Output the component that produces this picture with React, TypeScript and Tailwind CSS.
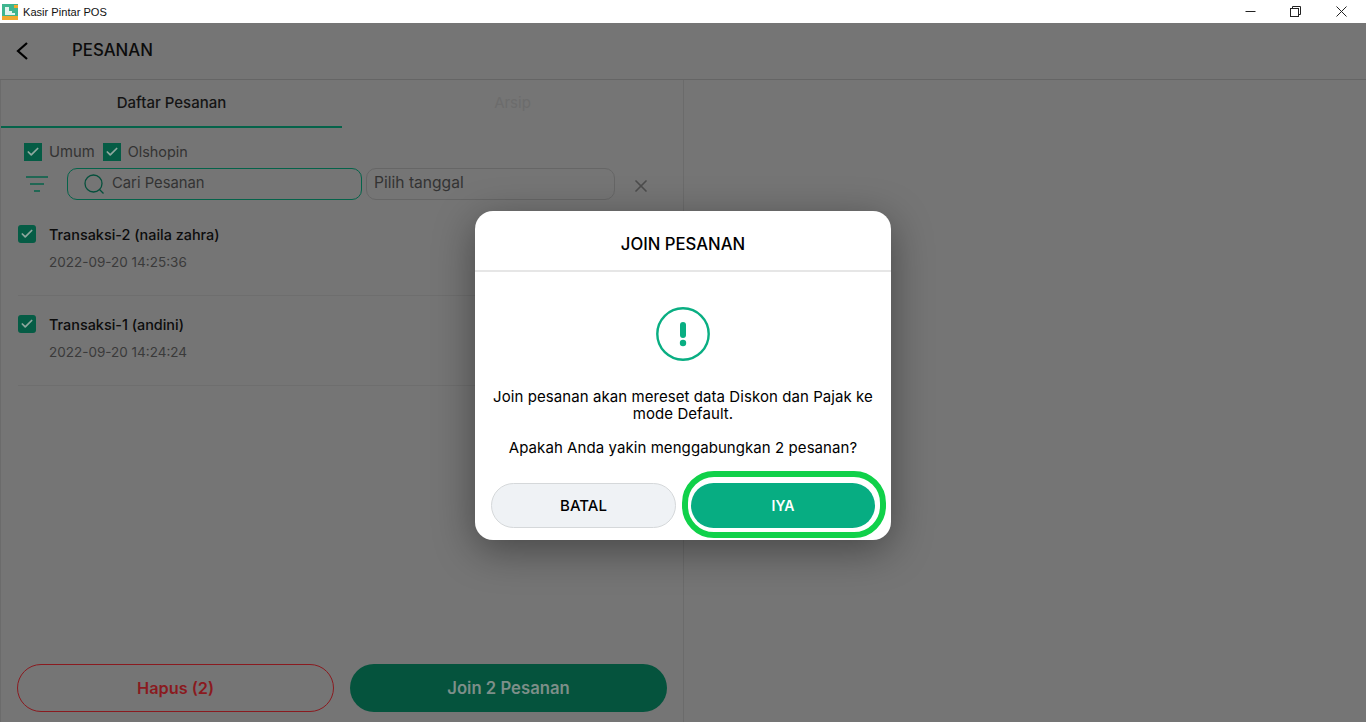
import React from 'react';
import { Check, X } from 'lucide-react';

const FONT = 'font-[Inter,"Noto_Sans",sans-serif]';

// Checkbox used by the filter row and the order rows
const Tick = ({ rounded }: { rounded?: boolean }) => (
  <span className={`flex h-[18px] w-[18px] shrink-0 items-center justify-center bg-[#055c45] ${rounded ? 'rounded-[3px]' : ''}`}>
    <Check className="h-[14px] w-[14px] text-[#8fa89f]" strokeWidth={3} />
  </span>
);

const orders = [
  { name: 'Transaksi-2 (naila zahra)', time: '2022-09-20 14:25:36' },
  { name: 'Transaksi-1 (andini)', time: '2022-09-20 14:24:24' },
];

const TitleBar = () => (
  <div className="flex h-[23px] items-center bg-white pl-[2px] font-['Liberation_Sans',sans-serif]">
    <svg width="16" height="16" viewBox="0 0 16 16" className="shrink-0">
      <rect width="16" height="16" fill="#3fb58f" />
      <rect y="12" width="16" height="4" fill="#f0a92e" />
      <rect x="12" y="1" width="4" height="3" fill="#f0a92e" />
      <path d="M4 3h3v4h3v2h3v2H3V3z" fill="#ffffff" opacity="0.85" />
    </svg>
    <span className="ml-[5px] pt-[1px] text-[11.1px] text-[#111]">Kasir Pintar POS</span>
    <div className="ml-auto mr-[2px] flex h-full items-center text-black">
      <span className="flex w-[44px] justify-center">
        <svg width="11" height="11" viewBox="0 0 11 11"><path d="M0.5 5.5h10" stroke="#222" fill="none" /></svg>
      </span>
      <span className="flex w-[46px] justify-center">
        <svg width="11" height="11" viewBox="0 0 11 11" fill="none" stroke="#222"><rect x="0.5" y="2.5" width="8" height="8" /><path d="M2.5 2.5v-2h8v8h-2" /></svg>
      </span>
      <span className="flex w-[46px] justify-center">
        <svg width="11" height="11" viewBox="0 0 11 11" fill="none" stroke="#222"><path d="M0.5 0.5l10 10M10.5 0.5l-10 10" /></svg>
      </span>
    </div>
  </div>
);

const App: React.FC = () => {
  return (
    <div className={`relative flex h-[722px] w-[1366px] flex-col overflow-hidden bg-[#757575] ${FONT}`}>
      <TitleBar />

      {/* page behind the dialog */}
      <div className="flex h-[57px] items-center border-b border-[#656565]">
        <svg width="12" height="18" viewBox="0 0 12 18" fill="none" stroke="#000" strokeWidth="2.2" className="ml-[16px] shrink-0">
          <path d="M11 1L2 9l9 8" />
        </svg>
        <h1 className="ml-[44px] text-[16.8px] font-medium text-[#0c0c0c]">PESANAN</h1>
      </div>

      <div className="flex flex-1">
        <div className="flex w-[684px] flex-col border-x border-[#6b6b6b]">
          <div className="flex h-[48px]">
            <div className="flex w-[341px] items-center justify-center border-b-2 border-[#05634a] text-[15px] font-medium text-[#141414]">Daftar Pesanan</div>
            <div className="flex flex-1 items-center justify-center pb-[2px] text-[15px] text-[#6c6c6c]">Arsip</div>
          </div>

          <div className="mt-[13px] flex items-center pl-[23px] text-[14.8px] leading-[22px] text-[#333]">
            <Tick />
            <span className="ml-[7px]">Umum</span>
            <span className="ml-[8px]"><Tick /></span>
            <span className="ml-[7px] text-[14.4px]">Olshopin</span>
          </div>

          <div className="mt-[5px] flex items-center pl-[24px]">
            <svg width="24" height="18" viewBox="0 0 24 18" fill="none" stroke="#05634a" strokeWidth="1.6" className="shrink-0">
              <path d="M1 2h22M5 9h14M9 16h6" />
            </svg>
            <div className="ml-[18px] flex h-[32px] w-[295px] items-center rounded-[10px] border border-[#05634a] pb-[1px] pl-[16px]">
              <svg width="20" height="20" viewBox="0 0 20 20" fill="none" stroke="#05503c" strokeWidth="1.3" className="shrink-0">
                <circle cx="9.5" cy="9.5" r="8.5" />
                <path d="M15.5 15.5l4 4" />
              </svg>
              <span className="ml-[8px] pb-[1px] text-[14.8px] text-[#333]">Cari Pesanan</span>
            </div>
            <div className="ml-[4px] flex h-[32px] w-[249px] items-center rounded-[10px] border border-[#666] pb-[2px] pl-[7px] text-[15.6px] text-[#333]">Pilih tanggal</div>
            <X className="ml-[16px] mt-[4px] h-[20px] w-[20px] text-[#4c4c4c]" strokeWidth={2} />
          </div>

          <div className="mt-[6px] flex-1">
            {orders.map((order) => (
              <div key={order.name} className="mx-[17px] h-[90px] border-b border-[#6e6e6e] pt-[18px]">
                <div className="flex items-center">
                  <Tick rounded />
                  <span className="ml-[13px] pt-[2px] text-[14.4px] leading-[18px] font-medium text-[#0c0c0c]">{order.name}</span>
                </div>
                <div className="ml-[31px] mt-[8px] text-[13.5px] leading-[20px] text-[#3a3a3a]">{order.time}</div>
              </div>
            ))}
          </div>

          <div className="mb-[10px] flex gap-[16px] px-[16px]">
            <button className="h-[48px] w-[317px] rounded-[24px] border border-[#8a1a1f] text-[16.3px] font-semibold text-[#8a1a1f]">Hapus (2)</button>
            <button className="h-[48px] w-[317px] rounded-[24px] bg-[#05533d] pt-[1px] text-[16.7px] font-semibold text-[#7d8f89]">Join 2 Pesanan</button>
          </div>
        </div>
      </div>

      {/* confirmation dialog */}
      <div className="absolute inset-x-0 top-[211px] flex justify-center">
        <div className="w-[416px] rounded-[18px] bg-white shadow-[0_10px_40px_rgba(0,0,0,0.4)]">
          <div className="flex h-[61px] items-center justify-center border-b-2 border-[#e6e6e6] pt-[8px] text-[16.7px] font-medium text-black">JOIN PESANAN</div>
          <div className="flex flex-col items-center px-[12px]">
            <svg width="54" height="54" viewBox="0 0 54 54" className="mt-[35px]">
              <circle cx="27" cy="27" r="25.7" fill="none" stroke="#09ae82" strokeWidth="2.4" />
              <rect x="24" y="15" width="6" height="16" rx="3" fill="#09ae82" />
              <circle cx="27" cy="36" r="3.2" fill="#09ae82" />
            </svg>
            <p className="mt-[27px] text-center text-[15px] leading-[17px] tracking-[0.07px] text-black">Join pesanan akan mereset data Diskon dan Pajak ke mode Default.</p>
            <p className="mt-[17px] text-center text-[15px] leading-[17px] tracking-[0.07px] text-black">Apakah Anda yakin menggabungkan 2 pesanan?</p>
          </div>
          <div className="mt-[27px] flex items-center pb-[12px] pl-[16px]">
            <button className="h-[45px] w-[185px] rounded-[23px] border border-[#d5d8da] bg-[#eff2f5] pt-[1px] text-[15px] font-medium text-black">BATAL</button>
            <div className="relative ml-[15px] h-[45px] w-[184px]">
              <button className="h-full w-full rounded-[23px] bg-[#07ad82] text-[14px] font-semibold text-white">IYA</button>
              {/* highlight ring drawn over the button */}
              <span className="absolute -bottom-[10px] -left-[9px] -right-[11px] -top-[12px] rounded-[32px] border-[6px] border-[#10d14a]" />
            </div>
          </div>
        </div>
      </div>
    </div>
  );
};

export default App;
